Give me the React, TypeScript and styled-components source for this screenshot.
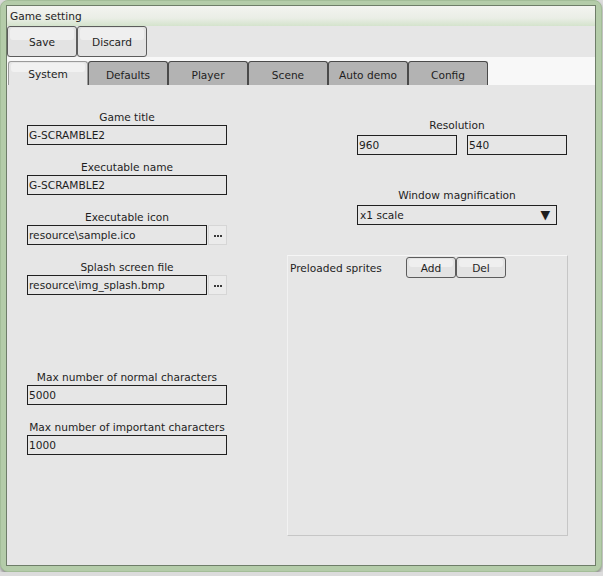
import React from "react";
import styled, { createGlobalStyle } from "styled-components";

const Global = createGlobalStyle`
  html, body { margin: 0; padding: 0; background: #dcdcdc; }
  body { font-family: "DejaVu Sans", "Liberation Sans", sans-serif; font-size: 10.6px; color: #1e1e1e; }
  * { box-sizing: border-box; }
`;

const Window = styled.div`
  width: 602px;
  height: 572px;
  border-radius: 8px;
  background: #b4cca9;
  border: 1px solid #a3bd98;
  padding: 4px 5px 5px 5px;
  box-shadow: 0 2px 3px rgba(0, 0, 0, 0.35);
`;

const Inner = styled.div`
  height: 100%;
  border: 1px solid #6e7d68;
  background: #e6e6e6;
  display: flex;
  flex-direction: column;
`;

const TitleBar = styled.div`
  height: 20px;
  flex: none;
  display: flex;
  align-items: center;
  padding-left: 3px;
  background: linear-gradient(#f3f4f0, #eaeee6 60%, #d4e3cc);
`;

const Toolbar = styled.div`
  height: 31px;
  flex: none;
  display: flex;
`;

const Button = styled.button<{ $w: number; $h: number }>`
  position: relative;
  width: ${(p) => p.$w}px;
  height: ${(p) => p.$h}px;
  padding: 0;
  margin: 0;
  border: 1px solid #5c5c5c;
  border-radius: 3px;
  background: #e3e3e3;
  font-family: inherit;
  font-size: 10.6px;
  color: #1e1e1e;
  &::before {
    content: "";
    position: absolute;
    left: 2px;
    right: 2px;
    top: 1px;
    height: 42%;
    border-radius: 3px;
    background: #efefef;
  }
  span { position: relative; }
`;

const TabStrip = styled.div`
  height: 28px;
  flex: none;
  background: #f8f8f8;
  display: flex;
  align-items: flex-end;
  padding-left: 1px;
`;

const Tab = styled.div<{ $active?: boolean }>`
  position: relative;
  width: 80px;
  height: 24px;
  display: flex;
  justify-content: center;
  align-items: center;
  padding-top: ${(p) => (p.$active ? "0" : "3px")};
  border: 1px solid ${(p) => (p.$active ? "#9a9a9a" : "#4a4a4a")};
  border-bottom: none;
  border-radius: 3px 3px 0 0;
  background: ${(p) => (p.$active ? "#e6e6e6" : "#b3b3b3")};
  ${(p) =>
    p.$active &&
    `&::before {
      content: "";
      position: absolute;
      left: 2px; right: 2px; top: 1px; height: 9px;
      border-radius: 3px;
      background: #f1f1f1;
    }`}
  span { position: relative; }
`;

const Body = styled.div`
  flex: 1;
  display: flex;
  gap: 60px;
  padding: 25px 0 0 20px;
`;

const LeftCol = styled.div`
  width: 200px;
  display: flex;
  flex-direction: column;
`;

const RightCol = styled.div`
  width: 280px;
  display: flex;
  flex-direction: column;
  padding-top: 8px;
`;

const Field = styled.div<{ $mt?: number }>`
  display: flex;
  flex-direction: column;
  margin-top: ${(p) => p.$mt ?? 0}px;
`;

const Label = styled.div<{ $indent?: number; $mb?: number }>`
  height: 15px;
  line-height: 15px;
  text-align: center;
  margin-left: ${(p) => p.$indent ?? 0}px;
  width: 200px;
  margin-bottom: ${(p) => p.$mb ?? 0}px;
  white-space: nowrap;
`;

const Input = styled.div<{ $w?: number }>`
  width: ${(p) => (p.$w ? `${p.$w}px` : "100%")};
  height: 20px;
  border: 1px solid #202020;
  line-height: 18px;
  padding-left: 1px;
  white-space: nowrap;
  overflow: hidden;
`;

const Row = styled.div<{ $gap?: number; $indent?: number }>`
  display: flex;
  gap: ${(p) => p.$gap ?? 0}px;
  margin-left: ${(p) => p.$indent ?? 0}px;
`;

const Browse = styled.div`
  width: 19px;
  height: 20px;
  margin-left: 1px;
  border: 1px solid #d6d6d6;
  background: #ebebeb;
  display: flex;
  justify-content: center;
  align-items: center;
  gap: 1px;
  padding-top: 1px;
`;

const Dot = styled.span`
  width: 2px;
  height: 2px;
  background: #3a3a3a;
`;

const Select = styled.div`
  width: 200px;
  height: 20px;
  margin-left: 70px;
  border: 1px solid #202020;
  display: flex;
  align-items: center;
  justify-content: space-between;
  padding: 0 6px 0 2px;
`;

const Arrow = styled.span`
  font-size: 12.5px;
  line-height: 1;
`;

const GroupBox = styled.div`
  margin-top: 30px;
  width: 281px;
  height: 281px;
  border: 1px solid #c6c6c6;
  border-top-color: #f6f6f6;
  border-left-color: #f2f2f2;
  padding: 1px 0 0 2px;
`;

const GroupHeader = styled.div`
  display: flex;
  align-items: center;
`;

const GroupTitle = styled.div`
  width: 116px;
  padding-top: 1px;
`;

const Dots = () => (
  <Browse>
    <Dot />
    <Dot />
    <Dot />
  </Browse>
);

export default function App() {
  return (
    <>
      <Global />
      <Window>
        <Inner>
          <TitleBar>Game setting</TitleBar>
          <Toolbar>
            <Button $w={70} $h={31}><span>Save</span></Button>
            <Button $w={70} $h={31}><span>Discard</span></Button>
          </Toolbar>
          <TabStrip>
            <Tab $active><span>System</span></Tab>
            <Tab><span>Defaults</span></Tab>
            <Tab><span>Player</span></Tab>
            <Tab><span>Scene</span></Tab>
            <Tab><span>Auto demo</span></Tab>
            <Tab><span>Config</span></Tab>
          </TabStrip>
          <Body>
            <LeftCol>
              <Field>
                <Label>Game title</Label>
                <Input>G-SCRAMBLE2</Input>
              </Field>
              <Field $mt={15}>
                <Label>Executable name</Label>
                <Input>G-SCRAMBLE2</Input>
              </Field>
              <Field $mt={15}>
                <Label>Executable icon</Label>
                <Row>
                  <Input $w={180}>resource\sample.ico</Input>
                  <Dots />
                </Row>
              </Field>
              <Field $mt={15}>
                <Label>Splash screen file</Label>
                <Row>
                  <Input $w={180}>resource\img_splash.bmp</Input>
                  <Dots />
                </Row>
              </Field>
              <Field $mt={75}>
                <Label>Max number of normal characters</Label>
                <Input>5000</Input>
              </Field>
              <Field $mt={15}>
                <Label>Max number of important characters</Label>
                <Input>1000</Input>
              </Field>
            </LeftCol>
            <RightCol>
              <Field>
                <Label $indent={70} $mb={2}>Resolution</Label>
                <Row $gap={10} $indent={70}>
                  <Input $w={100}>960</Input>
                  <Input $w={100}>540</Input>
                </Row>
              </Field>
              <Field $mt={33}>
                <Label $indent={70} $mb={2}>Window magnification</Label>
                <Select>
                  <span>x1 scale</span>
                  <Arrow>▼</Arrow>
                </Select>
              </Field>
              <GroupBox>
                <GroupHeader>
                  <GroupTitle>Preloaded sprites</GroupTitle>
                  <Button $w={50} $h={21}><span>Add</span></Button>
                  <Button $w={50} $h={21}><span>Del</span></Button>
                </GroupHeader>
              </GroupBox>
            </RightCol>
          </Body>
        </Inner>
      </Window>
    </>
  );
}
